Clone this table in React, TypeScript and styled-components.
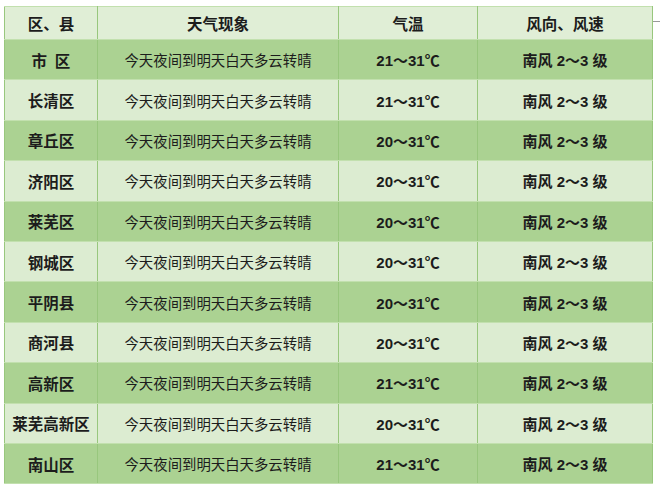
import React from 'react';
import styled, { createGlobalStyle } from 'styled-components';

interface IRow {
    area: string;
    weather: string;
    temp: string;
    wind: string;
}

const rows: IRow[] = [
    { area: '市\u2002区', weather: '今天夜间到明天白天多云转晴', temp: '21～31℃', wind: '南风 2～3 级' },
    { area: '长清区', weather: '今天夜间到明天白天多云转晴', temp: '21～31℃', wind: '南风 2～3 级' },
    { area: '章丘区', weather: '今天夜间到明天白天多云转晴', temp: '20～31℃', wind: '南风 2～3 级' },
    { area: '济阳区', weather: '今天夜间到明天白天多云转晴', temp: '20～31℃', wind: '南风 2～3 级' },
    { area: '莱芜区', weather: '今天夜间到明天白天多云转晴', temp: '20～31℃', wind: '南风 2～3 级' },
    { area: '钢城区', weather: '今天夜间到明天白天多云转晴', temp: '20～31℃', wind: '南风 2～3 级' },
    { area: '平阴县', weather: '今天夜间到明天白天多云转晴', temp: '20～31℃', wind: '南风 2～3 级' },
    { area: '商河县', weather: '今天夜间到明天白天多云转晴', temp: '20～31℃', wind: '南风 2～3 级' },
    { area: '高新区', weather: '今天夜间到明天白天多云转晴', temp: '21～31℃', wind: '南风 2～3 级' },
    { area: '莱芜高新区', weather: '今天夜间到明天白天多云转晴', temp: '20～31℃', wind: '南风 2～3 级' },
    { area: '南山区', weather: '今天夜间到明天白天多云转晴', temp: '21～31℃', wind: '南风 2～3 级' },
];

export default function App(): React.ReactElement {
    return (
        <>
            <GlobalStyle />
            <Page>
                <Table>
                    <colgroup>
                        <col style={{ width: 93 }} />
                        <col style={{ width: 241 }} />
                        <col style={{ width: 139 }} />
                        <col style={{ width: 175 }} />
                    </colgroup>
                    <thead>
                        <HeadRow>
                            <HeadCell>区、县</HeadCell>
                            <HeadCell>天气现象</HeadCell>
                            <HeadCell>气温</HeadCell>
                            <HeadCell>风向、风速</HeadCell>
                        </HeadRow>
                    </thead>
                    <tbody>
                        {rows.map((r, i) => (
                            <BodyRow key={r.area} dark={i % 2 === 0}>
                                <AreaCell>{r.area}</AreaCell>
                                <WeatherCell>{r.weather}</WeatherCell>
                                <NumCell>{r.temp}</NumCell>
                                <NumCell>{r.wind}</NumCell>
                            </BodyRow>
                        ))}
                    </tbody>
                </Table>
                <SideTick />
            </Page>
        </>
    );
}

const GlobalStyle = createGlobalStyle`
    html, body {
        margin: 0;
        padding: 0;
        background: #ffffff;
    }
    body {
        font-family: "Liberation Sans", "Noto Sans CJK SC", sans-serif;
        color: #1c1c1c;
    }
`;

const Page = styled.div`
    position: relative;
    width: 660px;
    height: 496px;
    padding: 6px 0 0 4px;
    box-sizing: border-box;
`;

const Table = styled.table`
    width: 648px;
    border-collapse: collapse;
    table-layout: fixed;
    border: 1px solid #a3cd8b;
`;

const HeadRow = styled.tr`
    height: 33px;
    background: #e0eed6;
`;

const BodyRow = styled.tr<{ dark: boolean }>`
    height: 40.4px;
    background: ${({ dark }) => (dark ? '#abd292' : '#dcecd1')};
`;

const Cell = styled.td`
    padding: 0;
    text-align: center;
    vertical-align: middle;
    border-left: 1px solid #98c77d;
    border-right: 1px solid #98c77d;
    border-top: 1px solid #c2e0ae;
    border-bottom: 1px solid #c2e0ae;
    white-space: nowrap;
`;

const HeadCell = styled(Cell).attrs({ as: 'th' })`
    font-size: 15.5px;
    font-weight: 700;
`;

const AreaCell = styled(Cell)`
    font-size: 15.5px;
    font-weight: 700;
`;

const WeatherCell = styled(Cell)`
    font-size: 14.4px;
    font-weight: 400;
`;

const NumCell = styled(Cell)`
    font-size: 15px;
    font-weight: 700;
`;

const SideTick = styled.div`
    position: absolute;
    left: 653px;
    top: 21px;
    width: 7px;
    height: 1px;
    background: #9a9a9a;
`;
